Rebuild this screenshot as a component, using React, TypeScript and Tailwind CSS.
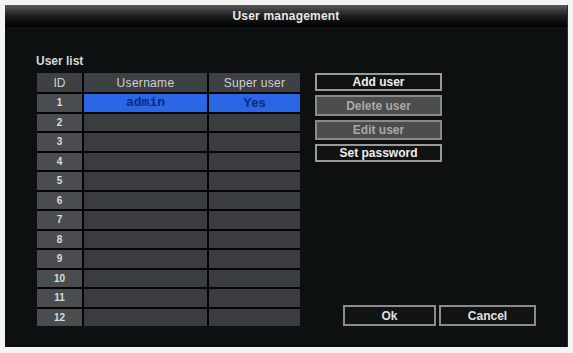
import React from "react";

const rows = Array.from({ length: 12 }, (_, i) => i + 1);

export default function App() {
  return (
    <div className="w-[573px] h-[353px] bg-[#f4f4f4] pt-[5px] pl-[5px] pr-[5px] pb-[6px]" style={{ fontFamily: '"Liberation Sans", Arial, sans-serif' }}>
      <div className="w-full h-full bg-[#0d1011] flex flex-col border-r border-[#2a2a2a]">
        <div className="h-[22px] bg-gradient-to-b from-[#5a5a5a] via-[#1e1e1e] to-[#030303] flex items-center justify-center text-[12px] font-bold text-[#e8e8e8] tracking-[0.2px]">
          User management
        </div>
        <div className="flex-1 flex pl-[31px] pt-[28px] pb-[21px] pr-[31px]">
          <div className="flex flex-col">
            <div className="text-[12px] font-bold text-[#d8d8d8] leading-none mb-[6px]">User list</div>
            <div className="grid grid-cols-[45px_123px_91px] gap-x-[2px] gap-y-[2px] bg-[#050505] ml-[1px]">
              <div className="h-[19px] bg-[#3e4143] flex items-center justify-center text-[12px] text-[#d0d0d0]">ID</div>
              <div className="h-[19px] bg-[#3e4143] flex items-center justify-center text-[12px] text-[#d0d0d0] tracking-[0.3px]">Username</div>
              <div className="h-[19px] bg-[#3e4143] flex items-center justify-center text-[12px] text-[#d0d0d0] tracking-[0.3px]">Super user</div>
              {rows.map((n) => (
                <React.Fragment key={n}>
                  <div className="h-[17.5px] bg-[#4a4d4f] flex items-center justify-center text-[10px] font-bold text-[#dcdcdc]">{n}</div>
                  {n === 1 ? (
                    <>
                      <div className="h-[17.5px] bg-[#2a66e6] flex items-center justify-center text-[13px] font-bold text-[#0c2a80]" style={{ fontFamily: '"Liberation Mono", monospace' }}>admin</div>
                      <div className="h-[17.5px] bg-[#2a66e6] flex items-center justify-center text-[13px] font-bold text-[#0c2a80]">Yes</div>
                    </>
                  ) : (
                    <>
                      <div className="h-[17.5px] bg-[#3a3d40]"></div>
                      <div className="h-[17.5px] bg-[#3a3d40]"></div>
                    </>
                  )}
                </React.Fragment>
              ))}
            </div>
          </div>
          <div className="flex-1 flex flex-col justify-between ml-[15px] pt-[18px]">
            <div className="flex flex-col gap-[4px] w-[127px]">
              <div className="h-[18px] bg-[#111313] border-2 border-[#9a9a9a] flex items-center justify-center text-[12px] font-bold text-[#eeeeee]">Add user</div>
              <div className="h-[21px] bg-[#4b4d4e] border-2 border-[#8a8a8a] flex items-center justify-center text-[12px] font-bold text-[#a8a8a8]">Delete user</div>
              <div className="h-[20px] bg-[#4b4d4e] border-2 border-[#8a8a8a] flex items-center justify-center text-[12px] font-bold text-[#a8a8a8]">Edit user</div>
              <div className="h-[18px] bg-[#111313] border-2 border-[#9a9a9a] flex items-center justify-center text-[12px] font-bold text-[#eeeeee]">Set password</div>
            </div>
            <div className="flex justify-end gap-[3px] pr-[0px]">
              <div className="w-[93px] h-[21px] bg-[#121414] border-2 border-[#8c8c8c] flex items-center justify-center text-[12px] font-bold text-[#e0e0e0]">Ok</div>
              <div className="w-[97px] h-[21px] bg-[#121414] border-2 border-[#8c8c8c] flex items-center justify-center text-[12px] font-bold text-[#e0e0e0]">Cancel</div>
            </div>
          </div>
        </div>
      </div>
    </div>
  );
}
